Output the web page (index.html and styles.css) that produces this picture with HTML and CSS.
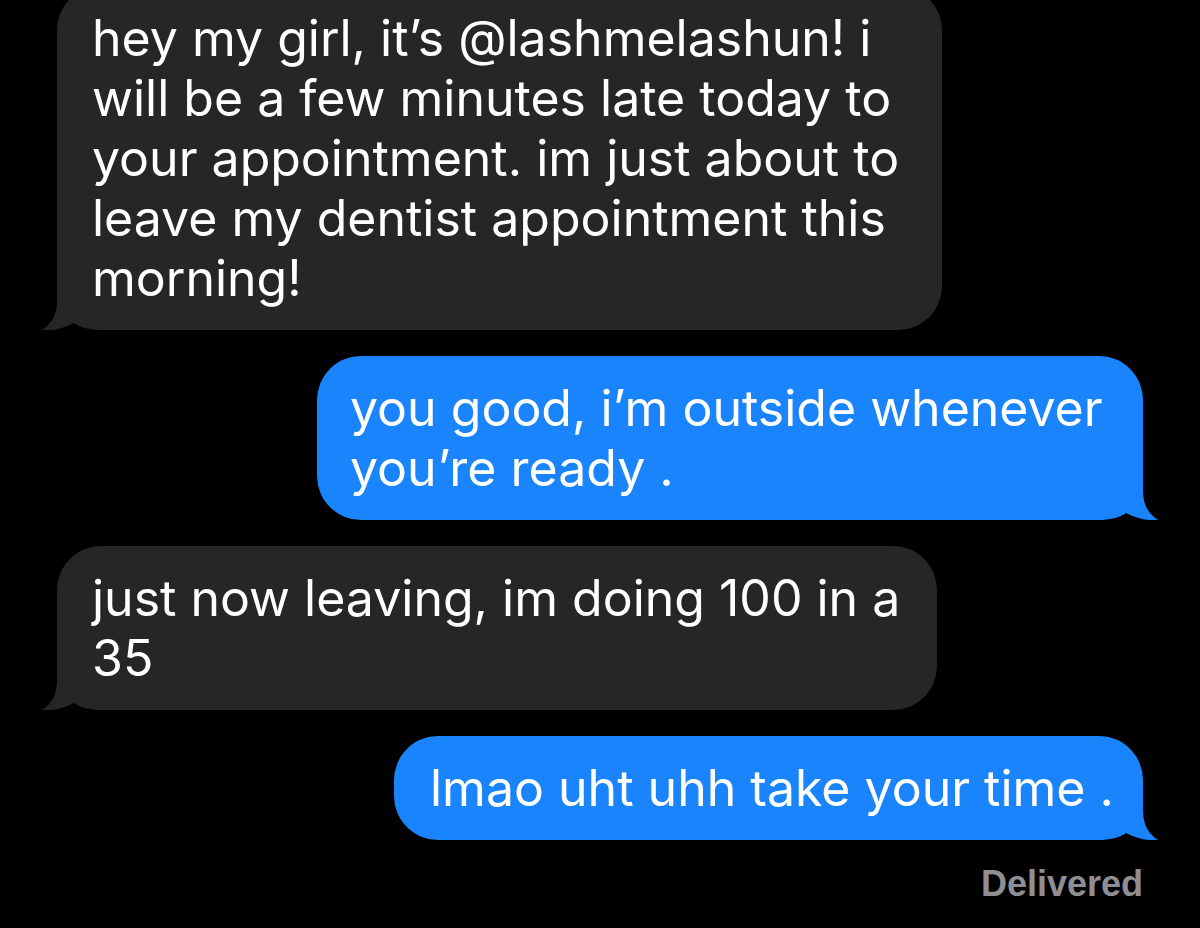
FILE: index.html
```html
<!DOCTYPE html>
<html>
<head>
<meta charset="utf-8">
<link rel="stylesheet" href="styles.css">
</head>
<body>
<div class="thread">
  <div class="row them">
    <div class="bubble gray b1">
      <svg class="tail" viewBox="0 0 80 44" width="80" height="44"><path d="M16,0 L16,14 C16,30 10,38 1,44 C12,45 24,42 33,37 C40,42 50,44 62,44 L80,44 L80,0 Z"/></svg>
      <span class="text">hey my girl, it’s @lashmelashun! i<br>will be a few minutes late today to<br>your appointment. im just about to<br>leave my dentist appointment this<br>morning!</span>
    </div>
  </div>
  <div class="row me">
    <div class="bubble blue b2">
      <svg class="tail" viewBox="0 0 80 44" width="80" height="44"><path d="M16,0 L16,14 C16,30 10,38 1,44 C12,45 24,42 33,37 C40,42 50,44 62,44 L80,44 L80,0 Z"/></svg>
      <span class="text">you good, i’m outside whenever<br>you’re ready .</span>
    </div>
  </div>
  <div class="row them">
    <div class="bubble gray b3">
      <svg class="tail" viewBox="0 0 80 44" width="80" height="44"><path d="M16,0 L16,14 C16,30 10,38 1,44 C12,45 24,42 33,37 C40,42 50,44 62,44 L80,44 L80,0 Z"/></svg>
      <span class="text">just now leaving, im doing 100 in a<br>35</span>
    </div>
  </div>
  <div class="row me">
    <div class="bubble blue b4">
      <svg class="tail" viewBox="0 0 80 44" width="80" height="44"><path d="M16,0 L16,14 C16,30 10,38 1,44 C12,45 24,42 33,37 C40,42 50,44 62,44 L80,44 L80,0 Z"/></svg>
      <span class="text">lmao uht uhh take your time .</span>
    </div>
  </div>
  <div class="status">Delivered</div>
</div>
</body>
</html>
```
FILE: styles.css
```css
html, body {
  margin: 0;
  padding: 0;
  background: #000;
}
body {
  width: 1200px;
  height: 928px;
  overflow: hidden;
  font-family: Inter, "Liberation Sans", sans-serif;
}
.thread {
  display: flex;
  flex-direction: column;
  gap: 26px;
  padding: 0 57px;
  margin-top: -14px;
}
.row {
  display: flex;
}
.row.them { justify-content: flex-start; }
.row.me { justify-content: flex-end; }
.bubble {
  position: relative;
  box-sizing: border-box;
  padding: 22px 0 22px 35px;
  border-radius: 44px;
  font-size: 50px;
  line-height: 60px;
  color: #fff;
  white-space: nowrap;
}
.bubble .text {
  position: relative;
  z-index: 1;
}
.bubble .tail {
  position: absolute;
  bottom: 0;
  left: -16px;
  z-index: 0;
}
.gray { background: #262629; }
.gray .tail path { fill: #262629; }
.blue { background: #1a84fc; }
.blue .tail path { fill: #1a84fc; }
.blue .tail {
  left: auto;
  right: -16px;
  transform: scaleX(-1);
}
.b1 { width: 885px; }
.b2 { width: 826px; padding-left: 33px; }
.b3 { width: 880px; }
.b4 { width: 749px; padding-left: 36px; }
.status {
  align-self: flex-end;
  margin-top: -3px;
  font-family: "Liberation Sans", Arial, sans-serif;
  font-weight: 700;
  font-size: 36px;
  color: #8e8e93;
  margin-right: 0;
}
```
